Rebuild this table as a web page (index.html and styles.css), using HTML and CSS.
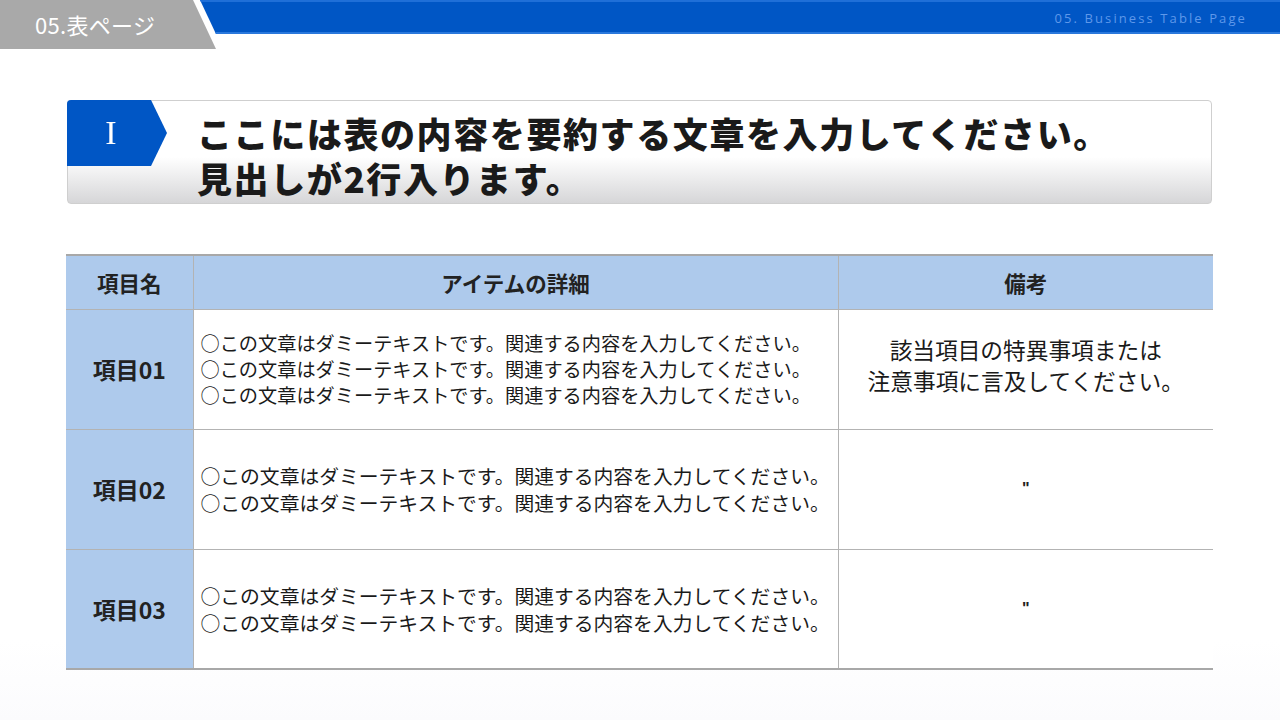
FILE: index.html
```html
<!DOCTYPE html>
<html lang="ja">
<head>
<meta charset="utf-8">
<link rel="stylesheet" href="styles.css">
</head>
<body>
<div class="slide">
  <header class="topbar">
    <div class="tab">05.表ページ</div>
    <div class="band"><span class="en">05. Business Table Page</span></div>
  </header>

  <section class="headline">
    <div class="badge"><span>I</span></div>
    <h1>ここには表の内容を要約する文章を入力してください。<br>見出しが2行入ります。</h1>
  </section>

  <table class="grid">
    <colgroup>
      <col class="c1"><col class="c2"><col class="c3">
    </colgroup>
    <thead>
      <tr><th>項目名</th><th>アイテムの詳細</th><th>備考</th></tr>
    </thead>
    <tbody>
      <tr>
        <th class="lbl">項目01</th>
        <td class="detail small">○この文章はダミーテキストです。関連する内容を入力してください。<br>○この文章はダミーテキストです。関連する内容を入力してください。<br>○この文章はダミーテキストです。関連する内容を入力してください。</td>
        <td class="note">該当項目の特異事項または<br>注意事項に言及してください。</td>
      </tr>
      <tr>
        <th class="lbl">項目02</th>
        <td class="detail">○この文章はダミーテキストです。関連する内容を入力してください。<br>○この文章はダミーテキストです。関連する内容を入力してください。</td>
        <td class="ditto">"</td>
      </tr>
      <tr>
        <th class="lbl">項目03</th>
        <td class="detail">○この文章はダミーテキストです。関連する内容を入力してください。<br>○この文章はダミーテキストです。関連する内容を入力してください。</td>
        <td class="ditto">"</td>
      </tr>
    </tbody>
  </table>
</div>
</body>
</html>
```

FILE: styles.css
```css
* { box-sizing: border-box; }
html, body { margin: 0; padding: 0; }
body {
  width: 1280px;
  height: 720px;
  overflow: hidden;
  background: #fdfdfe;
  font-family: "Noto Sans CJK JP", "Noto Sans", sans-serif;
  color: #222;
}
.slide {
  width: 1280px;
  height: 720px;
  background: linear-gradient(#ffffff 0, #ffffff 640px, #fbfbfd 720px);
  position: relative;
}

/* top bar */
.topbar {
  display: flex;
  height: 49px;
  position: relative;
}
.tab {
  width: 216px;
  height: 49px;
  background: #a9a9a9;
  clip-path: polygon(0 0, 193px 0, 216px 49px, 0 49px);
  color: #fff;
  font-size: 22px;
  line-height: 49px;
  padding-left: 35px;
  letter-spacing: 0.3px;
  flex: none;
}
.band {
  flex: 1;
  height: 34px;
  margin-left: -16px;
  background: #0056c5;
  border-top: 2px solid #1f6fd8;
  border-bottom: 2px solid #2a78dc;
  clip-path: polygon(0 0, 100% 0, 100% 100%, 16px 100%);
  display: flex;
  justify-content: flex-end;
  align-items: center;
  padding-right: 33px;
}
.en {
  font-family: "Open Sans", "DejaVu Sans", sans-serif;
  font-size: 13px;
  letter-spacing: 2.1px;
  color: #5e98ea;
  margin-top: 1px;
}

/* headline */
.headline {
  margin: 51px 68px 0 67px;
  height: 104px;
  border: 1px solid #cfcfcf;
  border-radius: 4px;
  background: linear-gradient(#ffffff 0%, #ffffff 55%, #d6d6d8 100%);
  display: flex;
  align-items: flex-start;
  position: relative;
}
.badge {
  width: 100px;
  height: 66px;
  margin: -1px 0 0 -1px;
  background: #0056c5;
  clip-path: polygon(0 0, 84px 0, 100px 33px, 84px 66px, 0 66px);
  border-radius: 4px 0 0 0;
  filter: drop-shadow(0 2px 2px rgba(0,0,0,0.25));
  display: flex;
  align-items: center;
  justify-content: center;
  padding-right: 12px;
  flex: none;
}
.badge span {
  color: #fff;
  font-family: "Liberation Serif", "DejaVu Serif", serif;
  font-size: 34px;
  line-height: 1;
}
.headline h1 {
  margin: 9px 0 0 30px;
  font-size: 35px;
  font-weight: 900;
  line-height: 45px;
  letter-spacing: 1.6px;
  color: #1a1a1a;
}

/* table */
.grid {
  margin: 50px 0 0 66px;
  width: 1147px;
  border-collapse: collapse;
  table-layout: fixed;
  border-top: 2px solid #a8a8a8;
  border-bottom: 2px solid #a8a8a8;
}
.c1 { width: 127px; }
.c2 { width: 645px; }
.c3 { width: 375px; }
.grid th, .grid td {
  border: 1px solid #b3b3b3;
  padding: 0;
}
.grid tr > :first-child { border-left: none; }
.grid tr > :last-child { border-right: none; }
.grid thead th {
  height: 54px;
  background: #aecaec;
  font-size: 21.5px;
  font-weight: 700;
  color: #222;
  text-align: center;
}
.grid tbody tr { height: 120px; }
.lbl {
  background: #aecaec;
  font-size: 23px;
  font-weight: 700;
  color: #222;
  text-align: center;
}
.detail {
  background: #fff;
  padding-left: 7px !important;
  font-size: 19.8px;
  line-height: 27px;
  color: #1a1a1a;
  white-space: nowrap;
}
.detail.small {
  font-size: 19.2px;
  line-height: 26px;
}
.note {
  background: #fff;
  text-align: center;
  font-size: 22.7px;
  line-height: 31px;
  color: #1a1a1a;
  padding-bottom: 8px !important;
}
.ditto {
  background: #fff;
  text-align: center;
  font-size: 16px;
  font-family: "Liberation Sans", sans-serif;
  font-weight: 700;
  color: #222;
}
```
